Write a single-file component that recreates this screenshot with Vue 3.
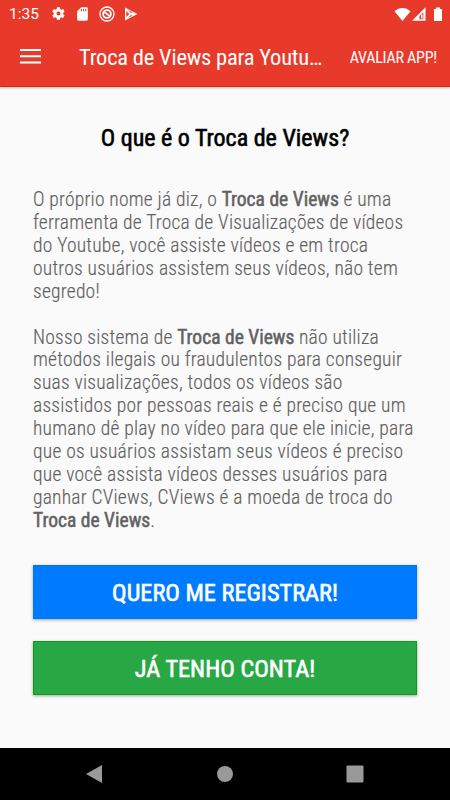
<script setup>
const first = [
  [['O próprio nome já diz, o '], ['Troca de Views', true], [' é uma']],
  [['ferramenta de Troca de Visualizações de vídeos']],
  [['do Youtube, você assiste vídeos e em troca']],
  [['outros usuários assistem seus vídeos, não tem']],
  [['segredo!']],
]
const second = [
  [['Nosso sistema de '], ['Troca de Views', true], [' não utiliza']],
  [['métodos ilegais ou fraudulentos para conseguir']],
  [['suas visualizações, todos os vídeos são']],
  [['assistidos por pessoas reais e é preciso que um']],
  [['humano dê play no vídeo para que ele inicie, para']],
  [['que os usuários assistam seus vídeos é preciso']],
  [['que você assista vídeos desses usuários para']],
  [['ganhar CViews, CViews é a moeda de troca do']],
  [['Troca de Views', true], ['.']],
]
const paragraphs = [first, second]
</script>

<template>
  <div class="screen">
    <header class="top">
      <div class="status">
        <span class="clock">1:35</span>
        <svg class="ico gear" viewBox="0 0 24 24"><path fill-rule="evenodd" d="M19.4 13a7.5 7.5 0 0 0 0-2l2.1-1.7a.5.5 0 0 0 .1-.6l-2-3.5a.5.5 0 0 0-.6-.2l-2.5 1a7 7 0 0 0-1.7-1l-.4-2.6a.5.5 0 0 0-.5-.4h-4a.5.5 0 0 0-.5.4L9 5a7 7 0 0 0-1.7 1l-2.5-1a.5.5 0 0 0-.6.2l-2 3.5a.5.5 0 0 0 .1.6L4.5 11a7.5 7.5 0 0 0 0 2l-2.2 1.7a.5.5 0 0 0-.1.6l2 3.5a.5.5 0 0 0 .6.2l2.5-1a7 7 0 0 0 1.7 1l.4 2.6a.5.5 0 0 0 .5.4h4a.5.5 0 0 0 .5-.4l.4-2.6a7 7 0 0 0 1.7-1l2.5 1a.5.5 0 0 0 .6-.2l2-3.5a.5.5 0 0 0-.1-.6zM12 15.200a3.200 3.200 0 1 1 0-6.400 3.200 3.200 0 0 1 0 6.400z" /></svg>
        <svg class="ico card" viewBox="0 0 24 24"><path fill-rule="evenodd" d="M18 2h-8L4 8v12a2 2 0 0 0 2 2h12a2 2 0 0 0 2-2V4a2 2 0 0 0-2-2zM9.500 4.500h1.600V8H9.500zM12.800 4.500h1.600V8h-1.600zM16 4.500h1.600V8H16z" /></svg>
        <svg class="ico ring" viewBox="0 0 16 16"><circle cx="8" cy="8" r="7" class="line" /><circle cx="8" cy="8" r="3.900" class="line thick" /><path class="line thick" d="M5.300 6l5.400 4" /></svg>
        <svg class="ico play" viewBox="0 0 14 14"><path fill-rule="evenodd" d="M1 .4L13.4 7 1 13.6zM2.300 4v6L5.300 7zM4 3.200L7 6l1.500-.7zM4 10.800L7 8l1.500.7z" /></svg>
        <svg class="sys" viewBox="0 0 50 16"><path d="M.5 5.300C5 .8 12 .8 16.500 5.300L8.500 15z" /><path fill-rule="evenodd" d="M18 14.700L31.500 1.200v13.500zM25.500 13.300h3.800V6.200l-3.800 3.800z" /><path d="M27 8.500h1.500v4H27z" /><path d="M40 3h2V1.500h4V3h2v12h-8z" /></svg>
      </div>
      <div class="bar">
        <svg class="menu" viewBox="0 0 21 15"><path d="M0 0h21v2H0zM0 6.300h21v2H0zM0 12.600h21v2H0z" /></svg>
        <h1 class="title">Troca de Views para Youtu…</h1>
        <button class="rate">AVALIAR APP!</button>
      </div>
    </header>
    <main class="content">
      <h2 class="heading">O que é o Troca de Views?</h2>
      <p v-for="(p, i) in paragraphs" :key="i" class="para">
        <span v-for="(l, j) in p" :key="j" class="row"><template v-for="(s, k) in l" :key="k"><b v-if="s[1]">{{ s[0] }}</b><template v-else>{{ s[0] }}</template></template></span>
      </p>
      <button class="cta blue">QUERO ME REGISTRAR!</button>
      <button class="cta green">JÁ TENHO CONTA!</button>
    </main>
    <nav class="nav">
      <svg viewBox="0 0 18 18"><path d="M1 9L17 0v18z" /></svg>
      <svg viewBox="0 0 18 18"><circle cx="9" cy="9" r="8" /></svg>
      <svg viewBox="0 0 18 18"><rect x=".5" y=".5" width="17" height="17" rx="1" /></svg>
    </nav>
  </div>
</template>

<style>
body { margin: 0; background: #fafafa; }
</style>
<style scoped>
.screen { width: 450px; height: 800px; display: flex; flex-direction: column; background: #fafafa; font-family: "Roboto Condensed", Roboto, sans-serif; font-stretch: 75%; overflow: hidden; }
svg { fill: #fff; display: block; flex: none; }
button { border: 0; padding: 0; background: none; color: #fff; font: inherit; }
.top { height: 87px; flex: none; box-sizing: border-box; background: #e83a2b; border-bottom: 1px solid #e2230f; box-shadow: 0 1px 2px rgba(0,0,0,.25); color: #fff; }
.status { display: flex; align-items: center; height: 27px; padding-left: 9px; }
.clock { font-size: 15.5px; width: 42px; font-stretch: 100%; font-family: Roboto, sans-serif; }
.gear { width: 15px; height: 15px; }
.card { width: 17px; height: 16px; margin-left: 8px; }
.ring { width: 16px; height: 16px; margin-left: 8px; }
.play { width: 14px; height: 14px; margin-left: 9px; }
.line { fill: none; stroke: #fff; stroke-width: 1.3; }
.thick { stroke-width: 1.8; }
.sys { width: 50px; height: 16px; margin-left: auto; margin-right: 6px; }
.bar { display: flex; align-items: center; height: 60px; padding: 0 13px 0 20px; }
.menu { width: 21px; height: 15px; margin-bottom: 1px; }
.title { margin: 0 0 0 38px; font-size: 22.5px; letter-spacing: -.22px; font-weight: 400; white-space: nowrap; }
.rate { margin-left: auto; font-size: 16px; letter-spacing: -.25px; white-space: nowrap; }
.content { flex: 1; padding: 37px 33px 0; display: flex; flex-direction: column; }
.heading { margin: 0 0 36px; font-size: 24px; line-height: 29px; font-weight: 400; -webkit-text-stroke: .6px #000; text-align: center; color: #000; }
.para { margin: 0 0 23px; font-size: 19.5px; line-height: 22.9px; color: #616161; font-weight: 340; letter-spacing: .22px; -webkit-text-stroke: .15px #616161; }
.row { display: block; white-space: pre; }
.para b { font-weight: 400; letter-spacing: 0; -webkit-text-stroke: .5px #616161; }
.cta { height: 54px; flex: none; padding-top: 2px; font-size: 24.3px; font-weight: 400; -webkit-text-stroke: .6px #fff; box-shadow: 0 1px 3px rgba(0,0,0,.35); }
.blue { background: #007bff; margin-top: 9px; border: 1px solid #0073fa; }
.green { background: #28a745; margin-top: 22px; border: 1px solid #0d9c12; }
.nav { height: 52px; flex: none; background: #000; display: flex; align-items: center; justify-content: space-between; padding: 0 86px 0 85px; }
.nav svg { width: 18px; height: 18px; fill: #999; }
</style>
